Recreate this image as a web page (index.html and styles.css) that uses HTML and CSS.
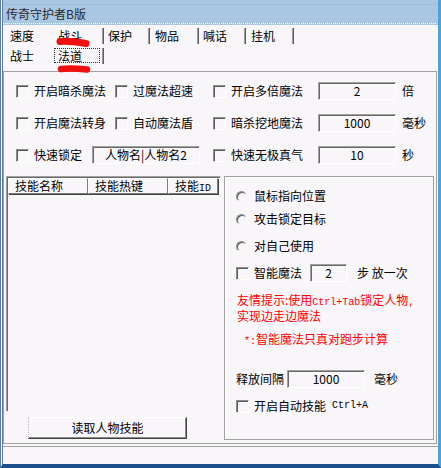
FILE: index.html
```html
<!DOCTYPE html>
<html lang="zh">
<head>
<meta charset="utf-8">
<title>传奇守护者B版</title>
<link rel="stylesheet" href="styles.css">
</head>
<body>
<div class="window">
  <div class="titlebar"><div class="title-inner">传奇守护者B版</div></div>
  <div class="tabs">
    <div class="tab-row">
      <span class="tab-head">速度</span>
      <span class="tab"><span class="tab-label">战斗</span><span class="sep"></span></span>
      <span class="tab"><span class="tab-label">保护</span><span class="sep"></span></span>
      <span class="tab"><span class="tab-label">物品</span><span class="sep"></span></span>
      <span class="tab"><span class="tab-label">喊话</span><span class="sep"></span></span>
      <span class="tab"><span class="tab-label">挂机</span><span class="sep"></span></span>
    </div>
    <div class="tab-row">
      <span class="tab-head tab-head-short">战士</span>
      <span class="tab"><span class="tab-focus">法道</span><span class="sep sep-near"></span></span>
    </div>
    <svg class="scribble scribble-top" width="36" height="13" viewBox="0 0 36 13"><path d="M5 5.5 C 12 5, 22 6, 31 7.5" stroke="#f01010" stroke-width="7" stroke-linecap="round" fill="none"/></svg>
    <svg class="scribble scribble-bottom" width="36" height="12" viewBox="0 0 36 12"><path d="M5 6 C 12 5, 22 5.5, 31 6.5" stroke="#f01010" stroke-width="6.5" stroke-linecap="round" fill="none"/></svg>
  </div>
  <div class="page">
    <div class="opt-rows">
      <div class="opt-row">
        <label class="check"><span class="cb"></span>开启暗杀魔法</label>
        <label class="check"><span class="cb"></span>过魔法超速</label>
        <label class="check"><span class="cb"></span>开启多倍魔法</label>
        <span class="field">2</span>
        <span class="unit">倍</span>
      </div>
      <div class="opt-row">
        <label class="check"><span class="cb"></span>开启魔法转身</label>
        <label class="check"><span class="cb"></span>自动魔法盾</label>
        <label class="check"><span class="cb"></span>暗杀挖地魔法</label>
        <span class="field">1000</span>
        <span class="unit">毫秒</span>
      </div>
      <div class="opt-row">
        <label class="check check-wide"><span class="cb"></span>快速锁定<span class="field field-name">人物名|人物名2</span></label>
        <label class="check"><span class="cb"></span>快速无极真气</label>
        <span class="field">10</span>
        <span class="unit">秒</span>
      </div>
    </div>
    <div class="lower">
      <div class="left-col">
        <div class="listview">
          <div class="lv-header">
            <span class="lv-col lv-col-wide">技能名称</span>
            <span class="lv-col lv-col-wide">技能热键</span>
            <span class="lv-col lv-col-narrow">技能<span class="mono">ID</span></span>
          </div>
        </div>
        <button class="btn" type="button">读取人物技能</button>
      </div>
      <div class="group">
        <label class="g-row radio-row radio-first"><span class="radio"></span>鼠标指向位置</label>
        <label class="g-row radio-row radio-second"><span class="radio"></span>攻击锁定目标</label>
        <label class="g-row radio-row radio-third"><span class="radio"></span>对自己使用</label>
        <div class="g-row smart-row"><span class="cb"></span><span>智能魔法</span><span class="field field-small">2</span><span class="smart-unit">步 放一次</span></div>
        <p class="hint">友情提示:使用<span class="mono">Ctrl+Tab</span>锁定人物<span class="mono">,</span><br>实现边走边魔法</p>
        <p class="hint hint-note"><span class="mono">*:</span>智能魔法只真对跑步计算</p>
        <div class="g-row interval-row">释放间隔<span class="field field-int">1000</span><span class="interval-unit">毫秒</span></div>
        <label class="g-row auto-row"><span class="cb"></span>开启自动技能 <span class="mono mono-gap">Ctrl+A</span></label>
      </div>
    </div>
  </div>
  <div class="status"></div>
</div>
</body>
</html>
```
FILE: styles.css
```css
* { box-sizing: border-box; margin: 0; padding: 0; }
html, body { width: 441px; height: 468px; overflow: hidden; }
body {
  font-family: "Noto Sans CJK SC", "Noto Sans", sans-serif;
  font-size: 12px;
  color: #000;
  background: #f8f6f9;
}
.window {
  width: 441px;
  height: 468px;
  display: flex;
  flex-direction: column;
  background: #f8f6f9;
  border-left: 3px double #5d7d9e;
  border-right: 3px solid #46a6da;
  border-bottom: 4px solid #1d4f8a;
}
.titlebar {
  height: 25px;
  flex: none;
  background: #a9c6e2;
  padding: 4px 2px 1px 0;
}
.title-inner {
  height: 20px;
  border-top: 1px dotted #c7a2b2;
  border-bottom: 1px dotted #ffffff;
  line-height: 18px;
  padding-left: 3px;
  color: #2b2b2b;
}
.tabs {
  position: relative;
  height: 46px;
  flex: none;
  padding: 3px 0 0 7px;
  display: flex;
  flex-direction: column;
  gap: 4px;
}
.tab-row { display: flex; height: 16px; align-items: center; line-height: 16px; }
.tab-head { width: 48px; }
.tab-head-short { width: 44px; }
.tab { display: flex; align-items: center; height: 16px; }
.tab-label { width: 44px; }
.tab:nth-child(3) .tab-label { width: 40px; }
.tab:nth-child(4) .tab-label { width: 42px; }
.tab:nth-child(5) .tab-label,
.tab:nth-child(6) .tab-label { width: 41px; }
.sep {
  width: 2px;
  height: 16px;
  border-left: 1px solid #9a9a9a;
  border-right: 1px solid #5e5e5e;
  margin-right: 4px;
}
.tab:nth-child(3) .sep, .tab:nth-child(5) .sep { margin-right: 5px; }
.tab-focus {
  width: 46px;
  height: 15px;
  border: 1px dotted #333;
  padding-left: 3px;
  line-height: 13px;
  align-self: flex-start;
}
.sep-near { margin-left: 2px; }
.scribble { position: absolute; }
.scribble-top { left: 52px; top: 11px; }
.scribble-bottom { left: 53px; top: 38px; }

.page {
  height: 373px;
  flex: none;
  margin-right: 1px;
  border: 1px solid #a0a0a0;
  display: flex;
  flex-direction: column;
}
.opt-rows {
  padding: 10px 0 0 12px;
  display: flex;
  flex-direction: column;
  gap: 14px;
}
.opt-row {
  display: grid;
  grid-template-columns: 99px 98px 105px 78px 1fr;
  height: 18px;
  align-items: center;
  line-height: 18px;
}
.check { display: flex; align-items: center; white-space: nowrap; }
.check-wide { grid-column: span 2; }
.cb {
  flex: none;
  width: 13px;
  height: 13px;
  border-top: 1px solid #8c8c8c;
  border-left: 1px solid #8c8c8c;
  border-right: 1px solid #ffffff;
  border-bottom: 1px solid #ffffff;
  box-shadow: inset 1px 1px 0 #5c5c5c;
  margin-right: 5px;
}
.field {
  display: block;
  height: 18px;
  border-top: 1px solid #a0a0a0;
  border-left: 1px solid #a0a0a0;
  border-right: 1px solid #ffffff;
  border-bottom: 1px solid #ffffff;
  box-shadow: inset 1px 1px 0 #6a6a6a;
  text-align: center;
  line-height: 16px;
  font-size: 12px;
}
.field-name { width: 108px; margin-left: 10px; }
.unit { margin-left: 6px; }

.lower {
  margin-top: 12px;
  display: flex;
  align-items: flex-start;
}
.left-col {
  width: 215px;
  margin-left: 2px;
  display: flex;
  flex-direction: column;
}
.listview {
  height: 235px;
  border-top: 1px solid #a0a0a0;
  border-left: 1px solid #a0a0a0;
  border-right: 1px solid #f8f6f9;
  box-shadow: inset 1px 1px 0 #6a6a6a;
  padding: 1px 0 0 1px;
}
.lv-header { display: flex; height: 16px; }
.lv-col {
  height: 16px;
  line-height: 14px;
  padding-left: 6px;
  border-top: 1px solid #ffffff;
  border-left: 1px solid #ffffff;
  border-right: 1px solid #7a7a7a;
  border-bottom: 1px solid #7a7a7a;
  box-shadow: 1px 1px 0 #404040;
}
.lv-col-wide { width: 80px; }
.lv-col-narrow { width: 50px; }
.mono { font-family: "Liberation Mono", "DejaVu Sans Mono", monospace; font-size: 10px; }
.btn {
  margin: 6px 0 0 22px;
  width: 159px;
  height: 22px;
  font: inherit;
  color: #000;
  background: #f8f6f9;
  border-top: 1px solid #ffffff;
  border-left: 1px dotted #b8b8b8;
  border-right: 1px solid #404040;
  border-bottom: 1px solid #404040;
  box-shadow: inset -1px -1px 0 #8a8a8a;
  line-height: 18px;
}
.group {
  width: 210px;
  height: 264px;
  margin-left: 3px;
  border: 1px solid #a0a0a0;
  box-shadow: inset 1px 1px 0 #ffffff;
  padding: 1px 0 0 11px;
  display: flex;
  flex-direction: column;
}
.g-row { display: flex; align-items: center; white-space: nowrap; }
.radio-row { height: 16px; line-height: 16px; }
.radio-first { margin-top: 10px; }
.radio-second { margin-top: 7px; }
.radio-third { margin-top: 11px; }
.radio {
  flex: none;
  width: 11px;
  height: 11px;
  border-radius: 50%;
  border: 1px solid transparent;
  border-top-color: #8a8a8a;
  border-left-color: #8a8a8a;
  box-shadow: inset 1px 1px 0 #5a5a5a;
  margin-right: 7px;
}
.smart-row { margin-top: 10px; height: 18px; line-height: 18px; }
.field-small { width: 37px; margin-left: 8px; }
.smart-unit { margin-left: 10px; }
.hint {
  color: #ff0000;
  line-height: 13px;
  margin: 11px 0 0 1px;
}
.hint-note { margin: 10px 0 0 8px; }
.interval-row { margin-top: 22px; height: 18px; line-height: 18px; }
.field-int { width: 78px; margin-left: 3px; }
.interval-unit { margin-left: 9px; }
.auto-row { margin-top: 10px; height: 16px; line-height: 16px; }
.mono-gap { margin-left: 6px; }

.status {
  margin-top: 2px;
  height: 18px;
  flex: none;
  border-top: 1px solid #a0a0a0;
}
```
